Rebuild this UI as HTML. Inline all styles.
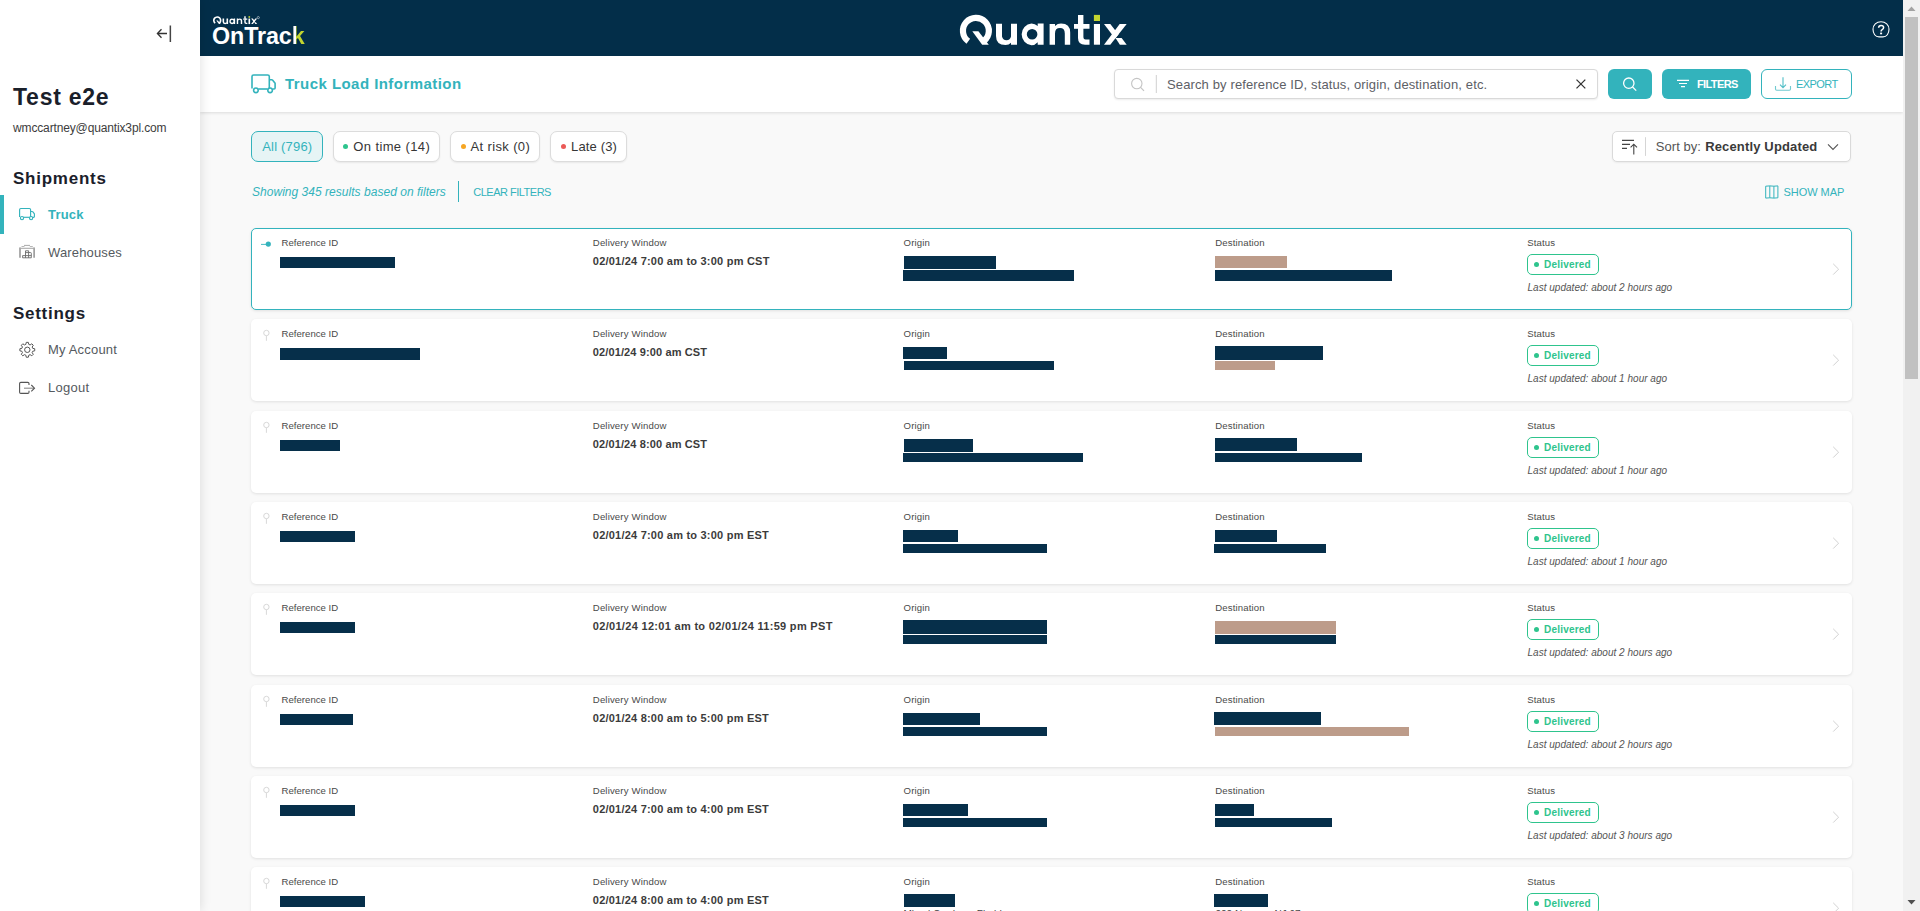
<!DOCTYPE html>
<html><head><meta charset="utf-8">
<style>
*{box-sizing:border-box;margin:0;padding:0}
html,body{width:1920px;height:911px;overflow:hidden;background:#f9f9f9;font-family:"Liberation Sans",sans-serif;}
.abs{position:absolute;white-space:nowrap}
#side{position:absolute;left:0;top:0;width:200px;height:911px;background:#fff;z-index:5;box-shadow:1px 0 10px rgba(0,0,0,0.115)}
#hdr{position:absolute;left:200px;top:0;width:1703px;height:56px;background:#032e49;z-index:3}
#sub{position:absolute;left:200px;top:56px;width:1703px;height:56px;background:#fff;z-index:2;box-shadow:0 1px 3px rgba(0,0,0,0.12)}
#sb{position:absolute;left:1903px;top:0;width:17px;height:911px;background:#f1f1f1;z-index:10}
.card{position:absolute;left:251px;width:1601px;height:82px;background:#fff;border-radius:5px;box-shadow:0 1px 3px rgba(0,0,0,0.10)}
.card.act{border:1.5px solid #33b3bd}
.lbl{position:absolute;font-size:10px;color:#444;white-space:nowrap;line-height:12px}
.val{position:absolute;font-size:11px;font-weight:bold;color:#3a3a3a;white-space:nowrap;line-height:13px;letter-spacing:0.2px}
.bar{position:absolute;background:#062f4a}
.tan{position:absolute;background:#bd9c8a}
.badge{position:absolute;width:72px;height:21px;border:1.3px solid #2ec48d;border-radius:5px}
.badge i{position:absolute;left:6px;top:6.6px;width:5px;height:5px;border-radius:50%;background:#2ec48d}
.badge span{position:absolute;left:16px;top:3.2px;letter-spacing:0.2px;font-size:10px;font-weight:bold;color:#2ec48d;line-height:13px}
.upd{position:absolute;font-size:10px;font-style:italic;color:#555;white-space:nowrap;line-height:12px}
.chev{position:absolute;left:1833px;width:7px;height:11px}
</style></head><body>
<div id="side"><svg class="abs" style="left:150px;top:20px" width="30" height="30" viewBox="150 20 30 30"><path d="M158 33.5H167M161.5 29.2L157.4 33.5L161.5 37.8" stroke="#333" stroke-width="1.3" fill="none"/><rect x="169.6" y="25.5" width="1.5" height="16.5" fill="#444"/></svg><div class="abs" style="left:13px;top:86.12px;font-size:23px;line-height:23px;font-weight:bold;color:#1a202a;letter-spacing:0.75px;">Test e2e</div>
<div class="abs" style="left:13px;top:121.99px;font-size:12px;line-height:12px;color:#3c3c3c;letter-spacing:-0.14px;">wmccartney@quantix3pl.com</div>
<div class="abs" style="left:13px;top:169.72px;font-size:17px;line-height:17px;font-weight:bold;color:#1a202a;letter-spacing:0.75px;">Shipments</div>
<div class="abs" style="left:0;top:195px;width:4px;height:39px;background:#33b3bc"></div><svg class="abs" style="left:17px;top:205px" width="22" height="18" viewBox="17 205 22 18"><path d="M19.6 217V209.7a1.2 1.2 0 0 1 1.2-1.2H29.4a1.2 1.2 0 0 1 1.2 1.2V217M30.6 211.5h1.5a1 1 0 0 1 .8 .4l1.5 2v2.6a.8 .8 0 0 1 -.8 .8h-.8" stroke="#33b3bc" stroke-width="1.15" fill="none" stroke-linejoin="round"/><path d="M23.6 217.3H29.5" stroke="#33b3bc" stroke-width="1.15"/><circle cx="22" cy="218.1" r="1.6" stroke="#33b3bc" stroke-width="1.15" fill="#fff"/><circle cx="31.1" cy="218.1" r="1.6" stroke="#33b3bc" stroke-width="1.15" fill="#fff"/></svg><div class="abs" style="left:48px;top:207.76px;font-size:13px;line-height:13px;font-weight:bold;color:#33b3bc;letter-spacing:0.2px;">Truck</div>
<svg class="abs" style="left:17px;top:243px" width="22" height="18" viewBox="17 243 22 18"><path d="M20 257.8V247.6M34.1 257.8V247.6" stroke="#8a8a8a" stroke-width="1.4"/><path d="M19.5 248.3H34.6" stroke="#ababab" stroke-width="1.1"/><path d="M21.5 246.5H24.5M29.8 246.5H32.8" stroke="#b0b0b0" stroke-width="0.9"/><path d="M24 245.4H30" stroke="#a0a0a0" stroke-width="0.9"/><path d="M25.5 257.8V250.8H28.6V257.8M25.5 252.6H28.6M22.6 255.6H31.3M28.6 252.5H30.5Q31.3 252.5 31.3 253.3V257.8M22.6 255.6V257.8H31.3" stroke="#6a6a6a" stroke-width="0.9" fill="none"/></svg><div class="abs" style="left:48px;top:246.26px;font-size:13px;line-height:13px;color:#555a60;letter-spacing:0.15px;">Warehouses</div>
<div class="abs" style="left:13px;top:304.72px;font-size:17px;line-height:17px;font-weight:bold;color:#1a202a;letter-spacing:0.72px;">Settings</div>
<svg class="abs" style="left:17px;top:339px" width="22" height="22" viewBox="17 339 22 22"><path d="M26.26 342.37 L28.34 342.37 L28.75 344.39 L30.10 344.95 L31.81 343.81 L33.29 345.29 L32.15 347.00 L32.71 348.35 L34.73 348.76 L34.73 350.84 L32.71 351.25 L32.15 352.60 L33.29 354.31 L31.81 355.79 L30.10 354.65 L28.75 355.21 L28.34 357.23 L26.26 357.23 L25.85 355.21 L24.50 354.65 L22.79 355.79 L21.31 354.31 L22.45 352.60 L21.89 351.25 L19.87 350.84 L19.87 348.76 L21.89 348.35 L22.45 347.00 L21.31 345.29 L22.79 343.81 L24.50 344.95 L25.85 344.39Z" stroke="#555" stroke-width="1" fill="none" stroke-linejoin="round"/><circle cx="27.3" cy="349.8" r="2.7" stroke="#555" stroke-width="1" fill="none"/></svg><div class="abs" style="left:48px;top:343.26px;font-size:13px;line-height:13px;color:#555a60;letter-spacing:0.18px;">My Account</div>
<svg class="abs" style="left:17px;top:379px" width="22" height="18" viewBox="17 379 22 18"><path d="M29 384.9V383.6Q29 382.4 27.8 382.4H20.8Q19.6 382.4 19.6 383.6V392.2Q19.6 393.4 20.8 393.4H27.8Q29 393.4 29 392.2V390.8" stroke="#555" stroke-width="1.1" fill="none"/><path d="M24 388.2H34" stroke="#8a8a8a" stroke-width="1.1"/><path d="M31.3 385L34.5 388.2L31.3 391.4" stroke="#555" stroke-width="1.1" fill="none"/></svg><div class="abs" style="left:48px;top:381.26px;font-size:13px;line-height:13px;color:#555a60;letter-spacing:0.27px;">Logout</div>
</div>
<div id="hdr"></div>
<svg class="abs" style="left:0;top:0;z-index:4" width="1903" height="56" viewBox="0 0 1903 56"><g transform="translate(960 15) scale(1.0)" fill="#fff"><path d="M8.29 26.28 A12.95 12.95 0 1 1 23.87 26.00" stroke="#fff" stroke-width="6.2" fill="none"/><path d="M12.3 16.3H18.4L28.8 29.7H22.2Z"/><path d="M36 8.8H42V21.5A4.6 4.6 0 0 0 51 21.5V8.8H57V29.7H51V27.8Q49 30 45.5 30Q36 30 36 21Z"/><path d="M83.6 8.6V29.7H77.7V27.2Q75 30.2 71.5 30.2A10.9 10.9 0 0 1 71.5 8.5Q75 8.5 77.7 11V8.6ZM66.8 19.3A5.2 5.2 0 1 0 77.4 19.3A5.2 5.2 0 1 0 66.8 19.3Z" fill-rule="evenodd"/><path d="M89.6 29.7V9H95V11Q97.5 8.6 101 8.6Q110.2 8.6 110.2 17.6V29.7H104.8V18.4Q104.8 13 100 13Q95 13 95 18.4V29.7Z"/><path d="M118 0H123.4V9H129.5V13.8H123.4V22.3Q123.4 24.5 125.6 24.5H129.5V29.7H125Q118 29.7 118 23Z"/><path d="M114 9H118V13.8H114Z"/><rect x="133.9" y="9" width="6.1" height="20.7"/><rect x="133.9" y="-0.1" width="6.1" height="6.1" fill="#c3d530"/><path d="M144 9H150.3L158.5 19.6L155 23.4Z"/><path d="M166.7 9H159.7L144 29.7H150.3Z"/><path d="M155.5 23.1H161.6L166.7 29.7H159.9Z"/></g><g transform="translate(213 16.2) scale(0.265)" fill="#fff"><path d="M8.29 26.28 A12.95 12.95 0 1 1 23.87 26.00" stroke="#fff" stroke-width="6.2" fill="none"/><path d="M12.3 16.3H18.4L28.8 29.7H22.2Z"/><path d="M36 8.8H42V21.5A4.6 4.6 0 0 0 51 21.5V8.8H57V29.7H51V27.8Q49 30 45.5 30Q36 30 36 21Z"/><path d="M83.6 8.6V29.7H77.7V27.2Q75 30.2 71.5 30.2A10.9 10.9 0 0 1 71.5 8.5Q75 8.5 77.7 11V8.6ZM66.8 19.3A5.2 5.2 0 1 0 77.4 19.3A5.2 5.2 0 1 0 66.8 19.3Z" fill-rule="evenodd"/><path d="M89.6 29.7V9H95V11Q97.5 8.6 101 8.6Q110.2 8.6 110.2 17.6V29.7H104.8V18.4Q104.8 13 100 13Q95 13 95 18.4V29.7Z"/><path d="M118 0H123.4V9H129.5V13.8H123.4V22.3Q123.4 24.5 125.6 24.5H129.5V29.7H125Q118 29.7 118 23Z"/><path d="M114 9H118V13.8H114Z"/><rect x="133.9" y="9" width="6.1" height="20.7"/><rect x="133.9" y="-0.1" width="6.1" height="6.1" fill="#c3d530"/><path d="M144 9H150.3L158.5 19.6L155 23.4Z"/><path d="M166.7 9H159.7L144 29.7H150.3Z"/><path d="M155.5 23.1H161.6L166.7 29.7H159.9Z"/></g><circle cx="258.3" cy="17.6" r="1.1" stroke="#fff" stroke-width="0.5" fill="none"/></svg>
<div class="abs" style="left:212px;top:25.08px;font-size:23.3px;line-height:23.3px;font-weight:bold;color:#fff;z-index:4;letter-spacing:-0.1px;">OnTrac<span style="background:linear-gradient(90deg,#fff 0 33%,#c3d530 33%);-webkit-background-clip:text;background-clip:text;color:transparent">k</span></div>
<svg class="abs" style="left:1870px;top:18px;z-index:4" width="22" height="22" viewBox="1870 18 22 22"><path d="M1881 21.7C1885.6 21.7 1889 25 1889 29.3C1889 33.6 1886.6 36.9 1883 36.9H1879C1875.4 36.9 1873 33.6 1873 29.3C1873 25 1876.4 21.7 1881 21.7Z" stroke="#fff" stroke-width="1.1" fill="none"/><path d="M1878.6 27.7Q1878.7 25.4 1881.1 25.4Q1883.6 25.4 1883.6 27.5Q1883.6 28.9 1882.2 29.6Q1881.1 30.2 1881.1 31.5" stroke="#fff" stroke-width="1.5" fill="none"/><rect x="1880.1" y="32.6" width="2" height="1.7" fill="#fff"/></svg><div id="sub"></div>
<svg class="abs" style="left:248px;top:70px;z-index:3" width="32" height="26" viewBox="248 70 32 26"><path d="M252 88.6V76.6a1.6 1.6 0 0 1 1.6-1.6H267.7a1.6 1.6 0 0 1 1.6 1.6V88.4M269.3 79.7h2.3a1.4 1.4 0 0 1 1.1 .5l2.4 3.1v4.7a1 1 0 0 1 -1 1h-1.4" stroke="#33b3bc" stroke-width="1.6" fill="none" stroke-linejoin="round"/><path d="M258.3 89H267.6" stroke="#33b3bc" stroke-width="1.6"/><circle cx="255.9" cy="90.3" r="2.3" stroke="#33b3bc" stroke-width="1.6" fill="#fff"/><circle cx="270.1" cy="90.3" r="2.3" stroke="#33b3bc" stroke-width="1.6" fill="#fff"/></svg><div class="abs" style="left:285px;top:76.49px;font-size:15px;line-height:15px;font-weight:bold;color:#33b3bc;z-index:3;letter-spacing:0.45px;">Truck Load Information</div>
<div class="abs" style="left:1114px;top:69px;width:484px;height:29.5px;border:1px solid #d9d9d9;border-radius:4px;background:#fff;box-shadow:0 1px 2px rgba(0,0,0,0.08);z-index:3"></div><svg class="abs" style="left:1125px;top:72px;z-index:4" width="490" height="24" viewBox="1125 72 490 24"><circle cx="1136.8" cy="83.6" r="5.2" stroke="#c4c4c4" stroke-width="1.1" fill="none"/><path d="M1140.6 87.4L1144 90.8" stroke="#c4c4c4" stroke-width="1.2"/><rect x="1155.8" y="75" width="1" height="18" fill="#d0d0d0"/><path d="M1576.5 79.6L1585.3 88.4M1585.3 79.6L1576.5 88.4" stroke="#333" stroke-width="1.3"/></svg><div class="abs" style="left:1167px;top:78.26px;font-size:13px;line-height:13px;color:#5d6066;z-index:4;letter-spacing:0.13px;">Search by reference ID, status, origin, destination, etc.</div>
<div class="abs" style="left:1608px;top:69px;width:44px;height:30px;border-radius:6px;background:#33b3bc;z-index:3"></div><svg class="abs" style="left:1615px;top:72px;z-index:4" width="30" height="24" viewBox="1615 72 30 24"><circle cx="1628.8" cy="83.2" r="5.2" stroke="#fff" stroke-width="1.3" fill="none"/><path d="M1632.6 87L1636.2 90.6" stroke="#fff" stroke-width="1.3"/></svg><div class="abs" style="left:1662px;top:69px;width:89px;height:30px;border-radius:6px;background:#33b3bc;z-index:3"></div><svg class="abs" style="left:1670px;top:75px;z-index:4" width="24" height="16" viewBox="1670 75 24 16"><path d="M1677 80.4H1689M1679 83.5H1687M1681 86.6H1685" stroke="#fff" stroke-width="1.1"/></svg><div class="abs" style="left:1697px;top:78.53px;font-size:11px;line-height:11px;font-weight:bold;color:#fff;z-index:4;letter-spacing:-0.62px;">FILTERS</div>
<div class="abs" style="left:1761px;top:69px;width:91px;height:30px;border-radius:6px;border:1px solid #33b3bc;background:#fff;z-index:3"></div><svg class="abs" style="left:1770px;top:72px;z-index:4" width="26" height="24" viewBox="1770 72 26 24"><path d="M1783 77.3V87.6M1780 84.6L1783 87.6L1786 84.6" stroke="#33b3bc" stroke-width="1.1" fill="none" opacity="0.85"/><path d="M1775.5 86V89Q1775.5 90.2 1776.7 90.2H1789.3Q1790.5 90.2 1790.5 89V86" stroke="#33b3bc" stroke-width="1.1" fill="none" opacity="0.7"/></svg><div class="abs" style="left:1796px;top:78.53px;font-size:11px;line-height:11px;color:#33b3bc;z-index:4;letter-spacing:-0.55px;">EXPORT</div>
<div class="abs" style="left:251px;top:131px;width:72px;height:31px;border:1.4px solid #33b3bc;border-radius:7px;background:#e6f4f5"></div><div class="abs" style="left:262.2px;top:139.96px;font-size:13px;line-height:13px;color:#33b3bc;letter-spacing:0.2px;">All (796)</div>
<div class="abs" style="left:332.5px;top:131px;width:107.80000000000001px;height:31px;border:1px solid #dcdcdc;border-radius:7px;background:#fff;box-shadow:0 1px 2px rgba(0,0,0,0.07)"></div><div class="abs" style="left:342.9px;top:143.9px;width:5.2px;height:5.2px;border-radius:50%;background:#2ec48d"></div><div class="abs" style="left:353.3px;top:139.96px;font-size:13px;line-height:13px;color:#363636;letter-spacing:0.38px;">On time (14)</div>
<div class="abs" style="left:450.4px;top:131px;width:89.80000000000007px;height:31px;border:1px solid #dcdcdc;border-radius:7px;background:#fff;box-shadow:0 1px 2px rgba(0,0,0,0.07)"></div><div class="abs" style="left:460.8px;top:143.9px;width:5.2px;height:5.2px;border-radius:50%;background:#f6a623"></div><div class="abs" style="left:470.4px;top:139.96px;font-size:13px;line-height:13px;color:#363636;letter-spacing:0.38px;">At risk (0)</div>
<div class="abs" style="left:550.4px;top:131px;width:76.80000000000007px;height:31px;border:1px solid #dcdcdc;border-radius:7px;background:#fff;box-shadow:0 1px 2px rgba(0,0,0,0.07)"></div><div class="abs" style="left:560.8px;top:143.9px;width:5.2px;height:5.2px;border-radius:50%;background:#eb5a57"></div><div class="abs" style="left:571px;top:139.96px;font-size:13px;line-height:13px;color:#363636;letter-spacing:0.16px;">Late (3)</div>
<div class="abs" style="left:252px;top:186.39px;font-size:12px;line-height:12px;font-style:italic;color:#33b3bc;letter-spacing:0.03px;">Showing 345 results based on filters</div>
<div class="abs" style="left:457.6px;top:181px;width:1.5px;height:21px;background:#33b3bc"></div><div class="abs" style="left:473.3px;top:186.53px;font-size:11px;line-height:11px;color:#33b3bc;letter-spacing:-0.5px;">CLEAR FILTERS</div>
<div class="abs" style="left:1612.4px;top:131.4px;width:239px;height:30.2px;border:1px solid #dadada;border-radius:5px;background:#fff;box-shadow:0 1px 2px rgba(0,0,0,0.06)"></div><svg class="abs" style="left:1615px;top:134px" width="240" height="26" viewBox="1615 134 240 26"><path d="M1622 140.4H1634M1622 144.4H1630M1622 148.4H1627" stroke="#444" stroke-width="1.1"/><path d="M1633.8 144.2V154.4M1630.6 147.4L1633.8 144.2L1637 147.4" stroke="#444" stroke-width="1.1" fill="none"/><rect x="1645" y="137.2" width="1" height="18.7" fill="#d5d5d5"/><path d="M1828 144.3L1833 149.5L1838 144.3" stroke="#555" stroke-width="1.1" fill="none"/></svg><div class="abs" style="left:1655.8px;top:140.16px;font-size:13px;line-height:13px;color:#555;letter-spacing:0.05px;">Sort by:</div>
<div class="abs" style="left:1705.2px;top:140.16px;font-size:13px;line-height:13px;font-weight:bold;color:#3a3a3a;letter-spacing:0.15px;">Recently Updated</div>
<svg class="abs" style="left:1762px;top:182px" width="20" height="20" viewBox="1762 182 20 20"><path d="M1765.7 186.2L1769.8 185.9L1773.9 186.2L1777.9 185.9V197.8L1773.9 198.1L1769.8 197.8L1765.7 198.1Z M1769.8 185.9V197.8M1773.9 186.2V198.1" stroke="#33b3bc" stroke-width="1" fill="none" stroke-linejoin="round"/></svg><div class="abs" style="left:1783.5px;top:186.53px;font-size:11px;line-height:11px;color:#33b3bc;letter-spacing:-0.05px;">SHOW MAP</div>
<div class="card act" style="top:228.00px"></div>
<svg class="abs" style="left:258px;top:238.00px" width="14" height="12" viewBox="0 0 14 12"><path d="M3 6.4H8" stroke="#33b3bc" stroke-width="0.9"/><circle cx="10.3" cy="6.1" r="2.6" fill="#33b3bc"/></svg><div class="abs" style="left:281.6px;top:238.11px;font-size:9.6px;line-height:9.6px;color:#4a4a4a;letter-spacing:0px;">Reference ID</div>
<div class="abs" style="left:592.8px;top:238.11px;font-size:9.6px;line-height:9.6px;color:#4a4a4a;letter-spacing:0.15px;">Delivery Window</div>
<div class="abs" style="left:903.6px;top:238.11px;font-size:9.6px;line-height:9.6px;color:#4a4a4a;letter-spacing:0.15px;">Origin</div>
<div class="abs" style="left:1215.2px;top:238.11px;font-size:9.6px;line-height:9.6px;color:#4a4a4a;letter-spacing:0.15px;">Destination</div>
<div class="abs" style="left:1527.2px;top:238.11px;font-size:9.6px;line-height:9.6px;color:#4a4a4a;letter-spacing:0.15px;">Status</div>
<div class="bar" style="left:280px;top:257.00px;width:115px;height:11px"></div><div class="abs" style="left:592.8px;top:256.43px;font-size:11px;line-height:11px;font-weight:bold;color:#3b3b3b;letter-spacing:0.22px;">02/01/24 7:00 am to 3:00 pm CST</div>
<div class="abs" style="left:904px;top:256px;width:92px;height:13px;background:#062f4a"></div><div class="abs" style="left:903px;top:270px;width:171px;height:11px;background:#062f4a"></div><div class="abs" style="left:1215px;top:256px;width:72px;height:12px;background:#bd9c8a"></div><div class="abs" style="left:1215px;top:270px;width:177px;height:11px;background:#062f4a"></div><div class="badge" style="left:1527px;top:254.20px"><i></i><span>Delivered</span></div><div class="abs" style="left:1527.5px;top:282.96px;font-size:10px;line-height:10px;font-style:italic;color:#555;letter-spacing:0.02px;">Last updated: about 2 hours ago</div>
<svg class="abs" style="left:1830px;top:261.00px" width="14" height="16" viewBox="0 0 14 16"><path d="M3.2 2.8L8.6 8.2L3.2 13.6" stroke="#d2d2d2" stroke-width="1" fill="none"/></svg>
<div class="card" style="top:319.00px"></div>
<svg class="abs" style="left:261px;top:328.00px" width="12" height="16" viewBox="0 0 12 16"><circle cx="5.4" cy="5.0" r="2.7" stroke="#d8d8d8" stroke-width="1" fill="none"/><path d="M5.4 7.7V12.8" stroke="#d8d8d8" stroke-width="1"/></svg><div class="abs" style="left:281.6px;top:329.11px;font-size:9.6px;line-height:9.6px;color:#4a4a4a;letter-spacing:0px;">Reference ID</div>
<div class="abs" style="left:592.8px;top:329.11px;font-size:9.6px;line-height:9.6px;color:#4a4a4a;letter-spacing:0.15px;">Delivery Window</div>
<div class="abs" style="left:903.6px;top:329.11px;font-size:9.6px;line-height:9.6px;color:#4a4a4a;letter-spacing:0.15px;">Origin</div>
<div class="abs" style="left:1215.2px;top:329.11px;font-size:9.6px;line-height:9.6px;color:#4a4a4a;letter-spacing:0.15px;">Destination</div>
<div class="abs" style="left:1527.2px;top:329.11px;font-size:9.6px;line-height:9.6px;color:#4a4a4a;letter-spacing:0.15px;">Status</div>
<div class="bar" style="left:280px;top:348.00px;width:140px;height:12px"></div><div class="abs" style="left:592.8px;top:347.43px;font-size:11px;line-height:11px;font-weight:bold;color:#3b3b3b;letter-spacing:0.12px;">02/01/24 9:00 am CST</div>
<div class="abs" style="left:903px;top:347px;width:44px;height:12px;background:#062f4a"></div><div class="abs" style="left:904px;top:361px;width:150px;height:9px;background:#062f4a"></div><div class="abs" style="left:1215px;top:346px;width:108px;height:14px;background:#062f4a"></div><div class="abs" style="left:1215px;top:361px;width:60px;height:9px;background:#bd9c8a"></div><div class="badge" style="left:1527px;top:345.20px"><i></i><span>Delivered</span></div><div class="abs" style="left:1527.5px;top:373.96px;font-size:10px;line-height:10px;font-style:italic;color:#555;letter-spacing:0.02px;">Last updated: about 1 hour ago</div>
<svg class="abs" style="left:1830px;top:352.00px" width="14" height="16" viewBox="0 0 14 16"><path d="M3.2 2.8L8.6 8.2L3.2 13.6" stroke="#d2d2d2" stroke-width="1" fill="none"/></svg>
<div class="card" style="top:411.00px"></div>
<svg class="abs" style="left:261px;top:420.00px" width="12" height="16" viewBox="0 0 12 16"><circle cx="5.4" cy="5.0" r="2.7" stroke="#d8d8d8" stroke-width="1" fill="none"/><path d="M5.4 7.7V12.8" stroke="#d8d8d8" stroke-width="1"/></svg><div class="abs" style="left:281.6px;top:421.11px;font-size:9.6px;line-height:9.6px;color:#4a4a4a;letter-spacing:0px;">Reference ID</div>
<div class="abs" style="left:592.8px;top:421.11px;font-size:9.6px;line-height:9.6px;color:#4a4a4a;letter-spacing:0.15px;">Delivery Window</div>
<div class="abs" style="left:903.6px;top:421.11px;font-size:9.6px;line-height:9.6px;color:#4a4a4a;letter-spacing:0.15px;">Origin</div>
<div class="abs" style="left:1215.2px;top:421.11px;font-size:9.6px;line-height:9.6px;color:#4a4a4a;letter-spacing:0.15px;">Destination</div>
<div class="abs" style="left:1527.2px;top:421.11px;font-size:9.6px;line-height:9.6px;color:#4a4a4a;letter-spacing:0.15px;">Status</div>
<div class="bar" style="left:280px;top:440.00px;width:60px;height:11px"></div><div class="abs" style="left:592.8px;top:439.43px;font-size:11px;line-height:11px;font-weight:bold;color:#3b3b3b;letter-spacing:0.12px;">02/01/24 8:00 am CST</div>
<div class="abs" style="left:904px;top:439px;width:69px;height:12.5px;background:#062f4a"></div><div class="abs" style="left:903px;top:453px;width:180px;height:9px;background:#062f4a"></div><div class="abs" style="left:1215px;top:438px;width:82px;height:13px;background:#062f4a"></div><div class="abs" style="left:1215px;top:453px;width:147px;height:9px;background:#062f4a"></div><div class="badge" style="left:1527px;top:437.20px"><i></i><span>Delivered</span></div><div class="abs" style="left:1527.5px;top:465.96px;font-size:10px;line-height:10px;font-style:italic;color:#555;letter-spacing:0.02px;">Last updated: about 1 hour ago</div>
<svg class="abs" style="left:1830px;top:444.00px" width="14" height="16" viewBox="0 0 14 16"><path d="M3.2 2.8L8.6 8.2L3.2 13.6" stroke="#d2d2d2" stroke-width="1" fill="none"/></svg>
<div class="card" style="top:502.00px"></div>
<svg class="abs" style="left:261px;top:511.00px" width="12" height="16" viewBox="0 0 12 16"><circle cx="5.4" cy="5.0" r="2.7" stroke="#d8d8d8" stroke-width="1" fill="none"/><path d="M5.4 7.7V12.8" stroke="#d8d8d8" stroke-width="1"/></svg><div class="abs" style="left:281.6px;top:512.11px;font-size:9.6px;line-height:9.6px;color:#4a4a4a;letter-spacing:0px;">Reference ID</div>
<div class="abs" style="left:592.8px;top:512.11px;font-size:9.6px;line-height:9.6px;color:#4a4a4a;letter-spacing:0.15px;">Delivery Window</div>
<div class="abs" style="left:903.6px;top:512.11px;font-size:9.6px;line-height:9.6px;color:#4a4a4a;letter-spacing:0.15px;">Origin</div>
<div class="abs" style="left:1215.2px;top:512.11px;font-size:9.6px;line-height:9.6px;color:#4a4a4a;letter-spacing:0.15px;">Destination</div>
<div class="abs" style="left:1527.2px;top:512.11px;font-size:9.6px;line-height:9.6px;color:#4a4a4a;letter-spacing:0.15px;">Status</div>
<div class="bar" style="left:280px;top:531.00px;width:75px;height:11px"></div><div class="abs" style="left:592.8px;top:530.43px;font-size:11px;line-height:11px;font-weight:bold;color:#3b3b3b;letter-spacing:0.22px;">02/01/24 7:00 am to 3:00 pm EST</div>
<div class="abs" style="left:903px;top:530px;width:55px;height:12px;background:#062f4a"></div><div class="abs" style="left:903px;top:544px;width:144px;height:9px;background:#062f4a"></div><div class="abs" style="left:1215px;top:530px;width:62px;height:12px;background:#062f4a"></div><div class="abs" style="left:1214px;top:544px;width:112px;height:9px;background:#062f4a"></div><div class="badge" style="left:1527px;top:528.20px"><i></i><span>Delivered</span></div><div class="abs" style="left:1527.5px;top:556.96px;font-size:10px;line-height:10px;font-style:italic;color:#555;letter-spacing:0.02px;">Last updated: about 1 hour ago</div>
<svg class="abs" style="left:1830px;top:535.00px" width="14" height="16" viewBox="0 0 14 16"><path d="M3.2 2.8L8.6 8.2L3.2 13.6" stroke="#d2d2d2" stroke-width="1" fill="none"/></svg>
<div class="card" style="top:593.00px"></div>
<svg class="abs" style="left:261px;top:602.00px" width="12" height="16" viewBox="0 0 12 16"><circle cx="5.4" cy="5.0" r="2.7" stroke="#d8d8d8" stroke-width="1" fill="none"/><path d="M5.4 7.7V12.8" stroke="#d8d8d8" stroke-width="1"/></svg><div class="abs" style="left:281.6px;top:603.11px;font-size:9.6px;line-height:9.6px;color:#4a4a4a;letter-spacing:0px;">Reference ID</div>
<div class="abs" style="left:592.8px;top:603.11px;font-size:9.6px;line-height:9.6px;color:#4a4a4a;letter-spacing:0.15px;">Delivery Window</div>
<div class="abs" style="left:903.6px;top:603.11px;font-size:9.6px;line-height:9.6px;color:#4a4a4a;letter-spacing:0.15px;">Origin</div>
<div class="abs" style="left:1215.2px;top:603.11px;font-size:9.6px;line-height:9.6px;color:#4a4a4a;letter-spacing:0.15px;">Destination</div>
<div class="abs" style="left:1527.2px;top:603.11px;font-size:9.6px;line-height:9.6px;color:#4a4a4a;letter-spacing:0.15px;">Status</div>
<div class="bar" style="left:280px;top:622.00px;width:75px;height:11px"></div><div class="abs" style="left:592.8px;top:621.43px;font-size:11px;line-height:11px;font-weight:bold;color:#3b3b3b;letter-spacing:0.31px;">02/01/24 12:01 am to 02/01/24 11:59 pm PST</div>
<div class="abs" style="left:903px;top:620px;width:144px;height:14px;background:#062f4a"></div><div class="abs" style="left:903px;top:635px;width:144px;height:9px;background:#062f4a"></div><div class="abs" style="left:1215px;top:621px;width:121px;height:13px;background:#bd9c8a"></div><div class="abs" style="left:1215px;top:635px;width:121px;height:9px;background:#062f4a"></div><div class="badge" style="left:1527px;top:619.20px"><i></i><span>Delivered</span></div><div class="abs" style="left:1527.5px;top:647.96px;font-size:10px;line-height:10px;font-style:italic;color:#555;letter-spacing:0.02px;">Last updated: about 2 hours ago</div>
<svg class="abs" style="left:1830px;top:626.00px" width="14" height="16" viewBox="0 0 14 16"><path d="M3.2 2.8L8.6 8.2L3.2 13.6" stroke="#d2d2d2" stroke-width="1" fill="none"/></svg>
<div class="card" style="top:685.00px"></div>
<svg class="abs" style="left:261px;top:694.00px" width="12" height="16" viewBox="0 0 12 16"><circle cx="5.4" cy="5.0" r="2.7" stroke="#d8d8d8" stroke-width="1" fill="none"/><path d="M5.4 7.7V12.8" stroke="#d8d8d8" stroke-width="1"/></svg><div class="abs" style="left:281.6px;top:695.11px;font-size:9.6px;line-height:9.6px;color:#4a4a4a;letter-spacing:0px;">Reference ID</div>
<div class="abs" style="left:592.8px;top:695.11px;font-size:9.6px;line-height:9.6px;color:#4a4a4a;letter-spacing:0.15px;">Delivery Window</div>
<div class="abs" style="left:903.6px;top:695.11px;font-size:9.6px;line-height:9.6px;color:#4a4a4a;letter-spacing:0.15px;">Origin</div>
<div class="abs" style="left:1215.2px;top:695.11px;font-size:9.6px;line-height:9.6px;color:#4a4a4a;letter-spacing:0.15px;">Destination</div>
<div class="abs" style="left:1527.2px;top:695.11px;font-size:9.6px;line-height:9.6px;color:#4a4a4a;letter-spacing:0.15px;">Status</div>
<div class="bar" style="left:280px;top:714.00px;width:73px;height:11px"></div><div class="abs" style="left:592.8px;top:713.43px;font-size:11px;line-height:11px;font-weight:bold;color:#3b3b3b;letter-spacing:0.22px;">02/01/24 8:00 am to 5:00 pm EST</div>
<div class="abs" style="left:903px;top:713px;width:77px;height:12px;background:#062f4a"></div><div class="abs" style="left:903px;top:727px;width:144px;height:9px;background:#062f4a"></div><div class="abs" style="left:1214px;top:712px;width:107px;height:13px;background:#062f4a"></div><div class="abs" style="left:1215px;top:727px;width:194px;height:9px;background:#bd9c8a"></div><div class="badge" style="left:1527px;top:711.20px"><i></i><span>Delivered</span></div><div class="abs" style="left:1527.5px;top:739.96px;font-size:10px;line-height:10px;font-style:italic;color:#555;letter-spacing:0.02px;">Last updated: about 2 hours ago</div>
<svg class="abs" style="left:1830px;top:718.00px" width="14" height="16" viewBox="0 0 14 16"><path d="M3.2 2.8L8.6 8.2L3.2 13.6" stroke="#d2d2d2" stroke-width="1" fill="none"/></svg>
<div class="card" style="top:776.00px"></div>
<svg class="abs" style="left:261px;top:785.00px" width="12" height="16" viewBox="0 0 12 16"><circle cx="5.4" cy="5.0" r="2.7" stroke="#d8d8d8" stroke-width="1" fill="none"/><path d="M5.4 7.7V12.8" stroke="#d8d8d8" stroke-width="1"/></svg><div class="abs" style="left:281.6px;top:786.11px;font-size:9.6px;line-height:9.6px;color:#4a4a4a;letter-spacing:0px;">Reference ID</div>
<div class="abs" style="left:592.8px;top:786.11px;font-size:9.6px;line-height:9.6px;color:#4a4a4a;letter-spacing:0.15px;">Delivery Window</div>
<div class="abs" style="left:903.6px;top:786.11px;font-size:9.6px;line-height:9.6px;color:#4a4a4a;letter-spacing:0.15px;">Origin</div>
<div class="abs" style="left:1215.2px;top:786.11px;font-size:9.6px;line-height:9.6px;color:#4a4a4a;letter-spacing:0.15px;">Destination</div>
<div class="abs" style="left:1527.2px;top:786.11px;font-size:9.6px;line-height:9.6px;color:#4a4a4a;letter-spacing:0.15px;">Status</div>
<div class="bar" style="left:280px;top:805.00px;width:75px;height:11px"></div><div class="abs" style="left:592.8px;top:804.43px;font-size:11px;line-height:11px;font-weight:bold;color:#3b3b3b;letter-spacing:0.22px;">02/01/24 7:00 am to 4:00 pm EST</div>
<div class="abs" style="left:903px;top:804px;width:65px;height:12px;background:#062f4a"></div><div class="abs" style="left:903px;top:818px;width:144px;height:9px;background:#062f4a"></div><div class="abs" style="left:1215px;top:804px;width:39px;height:12px;background:#062f4a"></div><div class="abs" style="left:1215px;top:818px;width:117px;height:9px;background:#062f4a"></div><div class="badge" style="left:1527px;top:802.20px"><i></i><span>Delivered</span></div><div class="abs" style="left:1527.5px;top:830.96px;font-size:10px;line-height:10px;font-style:italic;color:#555;letter-spacing:0.02px;">Last updated: about 3 hours ago</div>
<svg class="abs" style="left:1830px;top:809.00px" width="14" height="16" viewBox="0 0 14 16"><path d="M3.2 2.8L8.6 8.2L3.2 13.6" stroke="#d2d2d2" stroke-width="1" fill="none"/></svg>
<div class="card" style="top:867.00px"></div>
<svg class="abs" style="left:261px;top:876.00px" width="12" height="16" viewBox="0 0 12 16"><circle cx="5.4" cy="5.0" r="2.7" stroke="#d8d8d8" stroke-width="1" fill="none"/><path d="M5.4 7.7V12.8" stroke="#d8d8d8" stroke-width="1"/></svg><div class="abs" style="left:281.6px;top:877.11px;font-size:9.6px;line-height:9.6px;color:#4a4a4a;letter-spacing:0px;">Reference ID</div>
<div class="abs" style="left:592.8px;top:877.11px;font-size:9.6px;line-height:9.6px;color:#4a4a4a;letter-spacing:0.15px;">Delivery Window</div>
<div class="abs" style="left:903.6px;top:877.11px;font-size:9.6px;line-height:9.6px;color:#4a4a4a;letter-spacing:0.15px;">Origin</div>
<div class="abs" style="left:1215.2px;top:877.11px;font-size:9.6px;line-height:9.6px;color:#4a4a4a;letter-spacing:0.15px;">Destination</div>
<div class="abs" style="left:1527.2px;top:877.11px;font-size:9.6px;line-height:9.6px;color:#4a4a4a;letter-spacing:0.15px;">Status</div>
<div class="bar" style="left:280px;top:896.00px;width:85px;height:11px"></div><div class="abs" style="left:592.8px;top:895.43px;font-size:11px;line-height:11px;font-weight:bold;color:#3b3b3b;letter-spacing:0.22px;">02/01/24 8:00 am to 4:00 pm EST</div>
<div class="abs" style="left:904px;top:894px;width:51px;height:12.5px;background:#062f4a"></div><div class="abs" style="left:1214px;top:894px;width:54px;height:12.5px;background:#062f4a"></div><div class="badge" style="left:1527px;top:893.20px"><i></i><span>Delivered</span></div><div class="abs" style="left:1527.5px;top:921.96px;font-size:10px;line-height:10px;font-style:italic;color:#555;letter-spacing:0.02px;">Last updated: about 3 hours ago</div>
<svg class="abs" style="left:1830px;top:900.00px" width="14" height="16" viewBox="0 0 14 16"><path d="M3.2 2.8L8.6 8.2L3.2 13.6" stroke="#d2d2d2" stroke-width="1" fill="none"/></svg>
<div class="abs" style="left:903.5px;top:909.56px;font-size:10px;line-height:10px;color:#444;">Miami Gardens, Florida</div>
<div class="abs" style="left:1215.5px;top:909.56px;font-size:10px;line-height:10px;color:#444;">222 Nassau, NJ 07</div>
<div id="sb"><svg width="17" height="911" viewBox="0 0 17 911"><path d="M4.5 11L8.5 6.5L12.5 11Z" fill="#a3a3a3"/><rect x="2" y="17" width="13" height="362" fill="#c1c1c1"/><path d="M4.5 900L8.5 904.5L12.5 900Z" fill="#505050"/></svg></div></body></html>
